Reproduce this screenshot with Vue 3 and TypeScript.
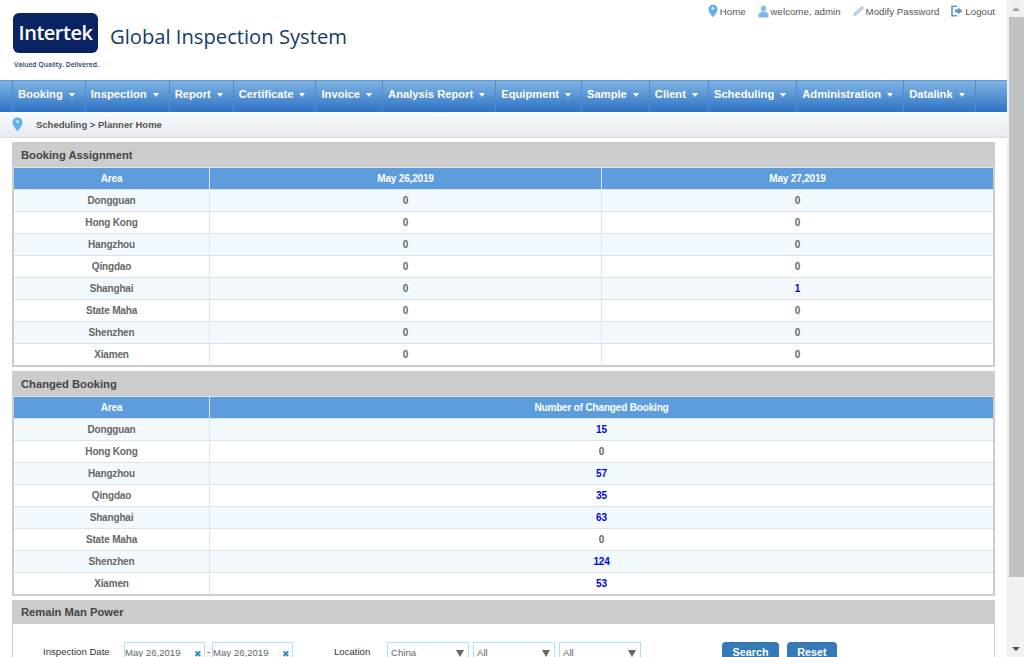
<script setup lang="ts">
interface Row {
  area: string;
  values: number[];
}

const navItems = [
  'Booking', 'Inspection', 'Report', 'Certificate', 'Invoice', 'Analysis Report',
  'Equipment', 'Sample', 'Client', 'Scheduling', 'Administration', 'Datalink'
];

const areas = ['Dongguan', 'Hong Kong', 'Hangzhou', 'Qingdao', 'Shanghai', 'State Maha', 'Shenzhen', 'Xiamen'];

const assignment: Row[] = areas.map((area) => ({
  area,
  values: area === 'Shanghai' ? [0, 1] : [0, 0]
}));

const changedCounts = [15, 0, 57, 35, 63, 0, 124, 53];
const changed: Row[] = areas.map((area, i) => ({ area, values: [changedCounts[i]] }));
</script>

<template>
  <div class="page">
    <div class="main">
      <header class="header">
        <div class="brand">
          <div class="logo-wrap">
            <div class="logo">Intertek</div>
            <div class="tagline">Valued Quality. Delivered.</div>
          </div>
          <div class="system-name">Global Inspection System</div>
        </div>
        <div class="top-links">
          <span class="top-link">
            <svg width="10" height="14" viewBox="0 0 11 15"><path d="M5.5 0.5C2.6 0.5 0.5 2.6 0.5 5.3 0.5 8.4 4 12.4 5.5 14.5 7 12.4 10.5 8.4 10.5 5.3 10.5 2.6 8.4 0.5 5.5 0.5Z" fill="#5fb0ee"/><circle cx="5.5" cy="4.6" r="1.5" fill="#e8f5ff"/></svg>
            Home
          </span>
          <span class="top-link">
            <svg width="11" height="13" viewBox="0 0 11 13"><ellipse cx="5.5" cy="3.6" rx="2.7" ry="3.2" fill="#8dbcec"/><path d="M0.5 12.5V10C0.5 8.2 2 7.4 3.5 7H7.5C9 7.4 10.5 8.2 10.5 10V12.5Z" fill="#82b5ea"/></svg>
            welcome, admin
          </span>
          <span class="top-link">
            <svg width="11" height="10" viewBox="0 0 12 11"><path d="M0.5 10.5L1.5 7.6 8.8 1.2C9.6 0.6 10.6 0.8 11 1.4 11.5 2.1 11.3 2.9 10.7 3.4L3.4 9.8Z" fill="#b4d4f0" stroke="#8ab8e2" stroke-width="0.7"/></svg>
            Modify Password
          </span>
          <span class="top-link">
            <svg width="12" height="12" viewBox="0 0 12 12"><path d="M6 1.2H1V10.8H6" fill="none" stroke="#5b97d8" stroke-width="1.6"/><path d="M4 4.6H7V2.6L11.5 6 7 9.4V7.4H4Z" fill="#5b97d8"/></svg>
            Logout
          </span>
        </div>
      </header>

      <nav class="nav">
        <div v-for="item in navItems" :key="item" class="nav-item">
          {{ item }}<span class="caret"></span>
        </div>
      </nav>

      <div class="crumb">
        <svg width="11" height="15" viewBox="0 0 11 15"><path d="M5.5 0.5C2.6 0.5 0.5 2.6 0.5 5.3 0.5 8.4 4 12.4 5.5 14.5 7 12.4 10.5 8.4 10.5 5.3 10.5 2.6 8.4 0.5 5.5 0.5Z" fill="#5fb0ee"/><circle cx="5.5" cy="4.6" r="1.5" fill="#cfe6fa"/></svg>
        <span>Scheduling &gt; Planner Home</span>
      </div>

      <section class="panel">
        <h2 class="panel-title">Booking Assignment</h2>
        <table class="grid">
          <colgroup>
            <col class="col-area" />
            <col /><col />
          </colgroup>
          <thead>
            <tr><th>Area</th><th>May 26,2019</th><th>May 27,2019</th></tr>
          </thead>
          <tbody>
            <tr v-for="row in assignment" :key="row.area">
              <td>{{ row.area }}</td>
              <td v-for="(v, i) in row.values" :key="i" :class="{ link: v > 0 }">{{ v }}</td>
            </tr>
          </tbody>
        </table>
      </section>

      <section class="panel">
        <h2 class="panel-title">Changed Booking</h2>
        <table class="grid">
          <colgroup>
            <col class="col-area" />
            <col />
          </colgroup>
          <thead>
            <tr><th>Area</th><th>Number of Changed Booking</th></tr>
          </thead>
          <tbody>
            <tr v-for="row in changed" :key="row.area">
              <td>{{ row.area }}</td>
              <td v-for="(v, i) in row.values" :key="i" :class="{ link: v > 0 }">{{ v }}</td>
            </tr>
          </tbody>
        </table>
      </section>

      <section class="panel panel-form">
        <h2 class="panel-title">Remain Man Power</h2>
        <div class="form-row">
          <label class="label-date">Inspection Date</label>
          <div class="field date">May 26,2019<span class="clear">✖</span></div>
          <span class="dash">-</span>
          <div class="field date">May 26,2019<span class="clear">✖</span></div>
          <label class="label-loc">Location</label>
          <div class="field select">China<span class="arrow"></span></div>
          <div class="field select">All<span class="arrow"></span></div>
          <div class="field select">All<span class="arrow"></span></div>
          <button class="btn btn-search" type="button">Search</button>
          <button class="btn" type="button">Reset</button>
        </div>
      </section>
    </div>

    <div class="scrollbar">
      <div class="sb-btn"><span class="sb-up"></span></div>
      <div class="sb-track"><div class="sb-thumb"></div></div>
      <div class="sb-btn"><span class="sb-down"></span></div>
    </div>
  </div>
</template>

<style>
html, body {
  margin: 0;
  overflow: hidden;
}
</style>

<style scoped>
.page {
  display: flex;
  height: 657px;
  overflow: hidden;
  font-family: "Liberation Sans", Arial, sans-serif;
  background: #fff;
}

.main {
  flex: 1;
  min-width: 0;
  overflow: hidden;
}

.header {
  display: flex;
  justify-content: space-between;
  height: 80px;
}

.brand {
  display: flex;
  padding: 13px 0 0 13px;
}

.logo-wrap {
  width: 85px;
}

.logo {
  height: 40px;
  background: #0a2463;
  border-radius: 6px;
  color: #fff;
  font-family: "Open Sans", sans-serif;
  font-size: 20px;
  font-weight: 600;
  line-height: 40px;
  text-align: center;
  letter-spacing: -0.5px;
}

.tagline {
  margin: 7px 0 0 1px;
  font-family: "Open Sans", sans-serif;
  font-size: 6.8px;
  font-weight: 600;
  color: #1c3a6e;
  white-space: nowrap;
}

.system-name {
  margin: 9px 0 0 12px;
  font-family: "Open Sans", sans-serif;
  font-size: 20.2px;
  font-weight: 500;
  line-height: 28px;
  height: 28px;
  color: #133c66;
  white-space: nowrap;
}

.top-links {
  display: flex;
  gap: 12px;
  padding: 4px 12px 0 0;
  height: 14px;
}

.top-link {
  display: flex;
  align-items: center;
  gap: 2px;
  font-size: 9.7px;
  color: #555;
  white-space: nowrap;
}

.nav {
  display: flex;
  height: 32px;
  padding-left: 12px;
  background: linear-gradient(180deg, #80b3e2 0%, #5b97d6 45%, #2f72c4 100%);
  border-top: 1px solid #5a9de0;
  box-sizing: border-box;
}

.nav-item {
  display: flex;
  align-items: center;
  box-sizing: border-box;
  padding: 0 5px 5px;
  height: 100%;
  font-size: 11.2px;
  font-weight: bold;
  color: #fff;
  border-right: 1px solid #4f8aca;
  white-space: nowrap;
}

.nav-item:first-child {
  border-left: 1px solid #4f8aca;
}

.caret {
  width: 0;
  height: 0;
  margin: 1px 5px 0 6px;
  border-left: 3px solid transparent;
  border-right: 3px solid transparent;
  border-top: 4px solid #fff;
}

.crumb {
  display: flex;
  align-items: center;
  gap: 13px;
  height: 26px;
  padding-left: 12px;
  background: linear-gradient(180deg, #fafbfd 0%, #e8e9f0 100%);
  border-bottom: 1px solid #ddd;
  box-sizing: border-box;
  font-size: 9.5px;
  font-weight: bold;
  color: #555;
}

.panel {
  margin: 4px 12px 0;
  border: 2px solid #ccc;
  box-sizing: border-box;
}

.panel-title {
  margin: 0;
  height: 23px;
  padding-left: 7px;
  background: #ccc;
  font-size: 11.2px;
  font-weight: bold;
  line-height: 23px;
  color: #444;
}

.grid {
  width: 100%;
  table-layout: fixed;
  border-collapse: separate;
  border-spacing: 0;
  font-size: 10px;
  letter-spacing: -0.17px;
}

.col-area {
  width: 195px;
}

.grid th {
  height: 22px;
  padding: 0;
  background: #5e9ddd;
  color: #fff;
  font-weight: bold;
  border-left: 1px solid #e0e6ee;
  border-top: 1px solid #e0e6ee;
  box-sizing: border-box;
}

.grid td {
  height: 22px;
  padding: 0;
  text-align: center;
  font-weight: bold;
  color: #666;
  border-left: 1px solid #dde3e8;
  border-top: 1px solid #dde3e8;
  box-sizing: border-box;
}

.grid th:first-child,
.grid td:first-child {
  border-left: none;
}

.grid tbody tr:nth-child(odd) {
  background: #f3faff;
}

.grid td.link {
  color: #0000ee;
}

.panel-form {
  height: 60px;
  border-width: 0 1px;
}

.panel-form .panel-title {
  height: 24px;
  line-height: 24px;
  padding-left: 8px;
}

.form-row {
  display: flex;
  align-items: flex-start;
  padding: 18px 0 0 30px;
  font-size: 9.6px;
  color: #333;
}

.form-row label {
  line-height: 20px;
}

.label-date {
  width: 81px;
}

.label-loc {
  width: 53px;
  margin-left: 41px;
}

.field {
  position: relative;
  box-sizing: border-box;
  height: 26px;
  border: 1px solid #a8e4ff;
  line-height: 20px;
  color: #666;
}

.date {
  width: 81px;
}

.dash {
  width: 7px;
  line-height: 20px;
  text-align: center;
}

.select {
  width: 82px;
  margin-right: 4px;
  padding-left: 3px;
}

.clear {
  position: absolute;
  right: 2px;
  top: 1px;
  color: #2d8fb8;
  font-size: 9px;
}

.arrow {
  position: absolute;
  right: 4px;
  top: 7px;
  width: 0;
  height: 0;
  border-left: 4px solid transparent;
  border-right: 4px solid transparent;
  border-top: 7px solid #666;
}

.btn {
  height: 26px;
  width: 50px;
  margin-left: 8px;
  padding: 0 0 6px;
  border: none;
  border-radius: 4px;
  background: #337ab7;
  color: #fff;
  font-family: inherit;
  font-size: 10.8px;
  font-weight: bold;
}

.btn-search {
  width: 57px;
  margin-left: 77px;
}

.scrollbar {
  display: flex;
  flex-direction: column;
  width: 17px;
  flex: none;
  background: #f1f1f1;
}

.sb-btn {
  display: flex;
  align-items: center;
  justify-content: center;
  height: 17px;
}

.sb-up,
.sb-down {
  width: 0;
  height: 0;
  border-left: 4px solid transparent;
  border-right: 4px solid transparent;
}

.sb-up {
  border-bottom: 4px solid #a3a3a3;
}

.sb-down {
  border-top: 4px solid #505050;
}

.sb-track {
  flex: 1;
}

.sb-thumb {
  height: 560px;
  margin-left: 2px;
  background: #c1c1c1;
}
</style>
